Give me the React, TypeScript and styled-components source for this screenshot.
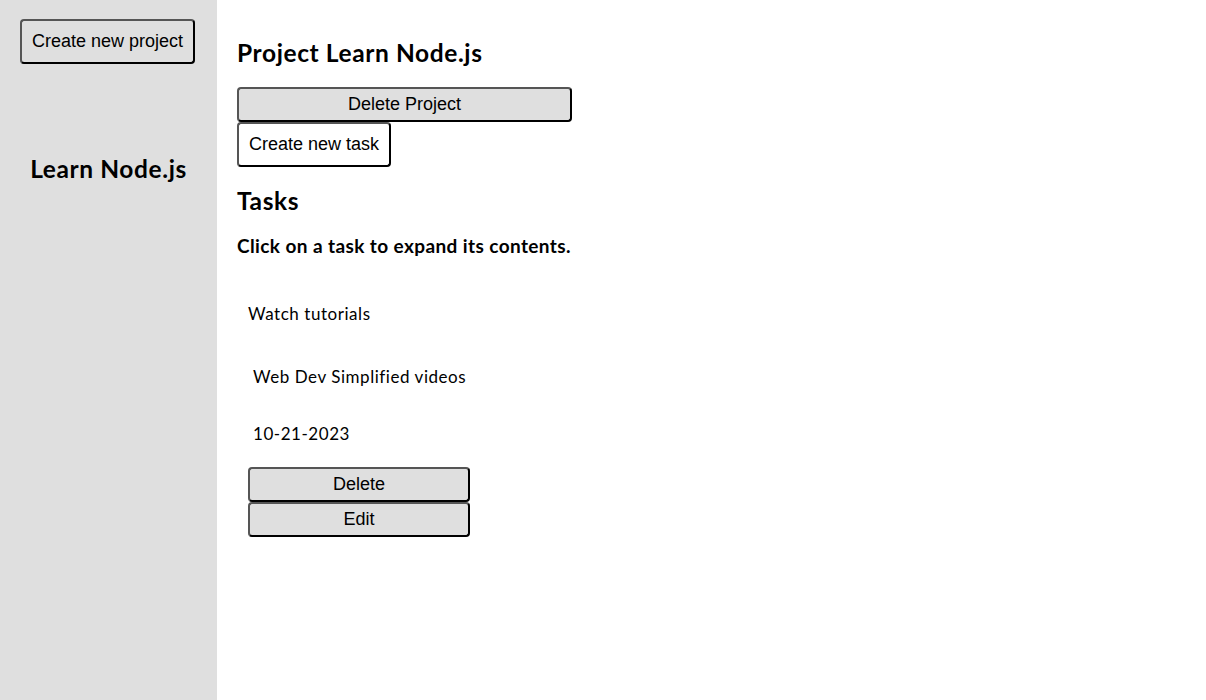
import React from "react";
import styled, { createGlobalStyle } from "styled-components";

const Global = createGlobalStyle`
  html, body { margin: 0; padding: 0; background: #ffffff; }
  body { font-family: "Lato", "DejaVu Sans", sans-serif; color: #000; }
`;

const Layout = styled.div`
  display: flex;
  min-height: 700px;
`;

const Sidebar = styled.aside`
  width: 217px;
  flex: none;
  background: #dfdfdf;
  display: flex;
  flex-direction: column;
  align-items: center;
  padding-top: 19px;
  box-sizing: border-box;
`;

const Button = styled.button<{ $bg?: string; $w?: number; $pad?: string }>`
  font-family: "Liberation Sans", Arial, sans-serif;
  font-size: 18px;
  line-height: 21px;
  color: #000;
  background: ${(p) => p.$bg ?? "#dfdfdf"};
  width: ${(p) => (p.$w ? `${p.$w}px` : "auto")};
  padding: ${(p) => p.$pad ?? "10px 10px"};
  border: 2px solid;
  border-color: #555 #000 #000 #555;
  border-radius: 4px;
  box-sizing: border-box;
  display: block;
  cursor: pointer;
  text-align: center;
  white-space: nowrap;
`;

const SideButton = styled(Button)`
  margin-right: 2px;
`;

const SideTitle = styled.h2`
  font-family: "Lato", "DejaVu Sans", sans-serif;
  font-weight: bold;
  font-size: 24.5px;
  letter-spacing: 0.6px;
  line-height: 28px;
  margin: 91px 0 0 0;
`;

const Main = styled.main`
  flex: 1;
  padding: 39px 20px 20px 20px;
  display: flex;
  flex-direction: column;
  align-items: flex-start;
`;

const Heading = styled.h2`
  font-family: "Lato", "DejaVu Sans", sans-serif;
  font-weight: bold;
  font-size: 24.5px;
  letter-spacing: 0.6px;
  line-height: 28px;
  margin: 0 0 20px 0;
`;

const Hint = styled.p`
  font-family: "Lato", "DejaVu Sans", sans-serif;
  font-weight: bold;
  font-size: 19px;
  letter-spacing: 0.4px;
  line-height: 22px;
  margin: 0 0 47px 0;
`;

const TaskCard = styled.div`
  display: flex;
  flex-direction: column;
  align-items: flex-start;
  padding-left: 11px;
`;

const TaskText = styled.div<{ $indent?: number; $mb: number }>`
  font-family: "Lato", "DejaVu Sans", sans-serif;
  font-size: 17px;
  letter-spacing: 0.55px;
  line-height: 20px;
  padding-left: ${(p) => p.$indent ?? 0}px;
  margin-bottom: ${(p) => p.$mb}px;
`;

const Spacer = styled.div`
  height: 20px;
`;

export default function App() {
  return (
    <>
      <Global />
      <Layout>
        <Sidebar>
          <SideButton $w={175} $pad="10px 8px">Create new project</SideButton>
          <SideTitle>Learn Node.js</SideTitle>
        </Sidebar>
        <Main>
          <Heading>Project Learn Node.js</Heading>
          <Button $w={335} $pad="5px 10px">Delete Project</Button>
          <Button $w={154} $bg="#ffffff" $pad="10px 8px">Create new task</Button>
          <Spacer />
          <Heading>Tasks</Heading>
          <Hint>Click on a task to expand its contents.</Hint>
          <TaskCard>
            <TaskText $mb={43}>Watch tutorials</TaskText>
            <TaskText $indent={5} $mb={37}>Web Dev Simplified videos</TaskText>
            <TaskText $indent={5} $mb={23}>10-21-2023</TaskText>
            <Button $w={222} $pad="5px 10px">Delete</Button>
            <Button $w={222} $pad="5px 10px">Edit</Button>
          </TaskCard>
        </Main>
      </Layout>
    </>
  );
}
